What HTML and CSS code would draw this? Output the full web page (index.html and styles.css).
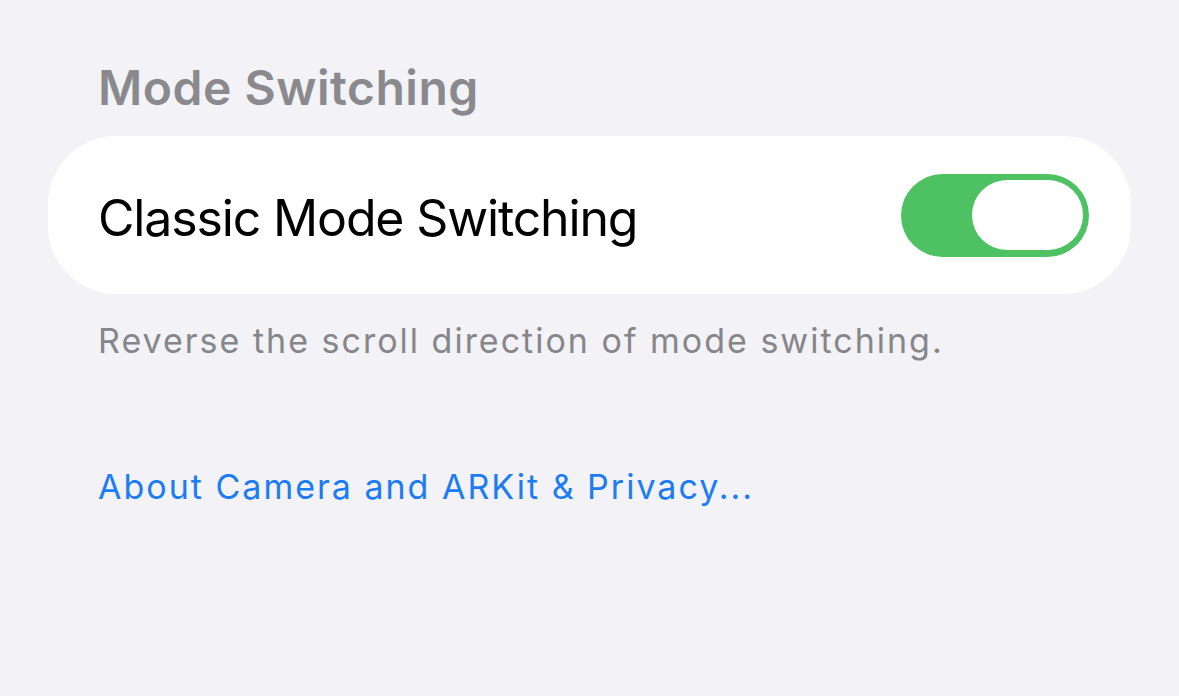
FILE: index.html
```html
<!DOCTYPE html>
<html>
<head>
<meta charset="utf-8">
<link rel="stylesheet" href="styles.css">
</head>
<body>
<div class="page">
  <div class="section-title">Mode Switching</div>
  <div class="card">
    <div class="row-label">Classic Mode Switching</div>
    <div class="toggle"><div class="knob"></div></div>
  </div>
  <div class="footnote">Reverse the scroll direction of mode switching.</div>
  <div class="link">About Camera and ARKit &amp; Privacy...</div>
</div>
</body>
</html>
```
FILE: styles.css
```css
html, body {
  margin: 0;
  padding: 0;
  background: #f2f2f7;
}
body {
  font-family: Inter, "Noto Sans", sans-serif;
  width: 1179px;
  height: 696px;
  overflow: hidden;
}
.page {
  padding: 59px 48px 0 48px;
  display: flex;
  flex-direction: column;
}
.section-title {
  padding-left: 50px;
  font-size: 48px;
  line-height: 58px;
  font-weight: 600;
  letter-spacing: 0.5px;
  color: #8a8a8e;
}
.card {
  margin-top: 19px;
  height: 158px;
  box-sizing: border-box;
  background: #ffffff;
  border-radius: 68px;
  display: flex;
  align-items: center;
  justify-content: space-between;
  padding: 0 42px 0 50px;
}
.row-label {
  font-size: 50px;
  line-height: 1.21;
  letter-spacing: -1.15px;
  color: #000;
  padding-top: 6px;
}
.toggle {
  width: 188px;
  height: 83px;
  border-radius: 42px;
  background: #4ec263;
  display: flex;
  align-items: center;
  justify-content: flex-end;
  padding-right: 6px;
  box-sizing: border-box;
}
.knob {
  width: 111px;
  height: 70px;
  border-radius: 35px;
  background: #ffffff;
}
.footnote {
  margin-top: 26px;
  padding-left: 50px;
  font-size: 34px;
  line-height: 42px;
  letter-spacing: 2px;
  color: #86868a;
}
.link {
  margin-top: 104px;
  padding-left: 50px;
  font-size: 34px;
  line-height: 42px;
  letter-spacing: 2px;
  color: #1b7cf4;
}
```
